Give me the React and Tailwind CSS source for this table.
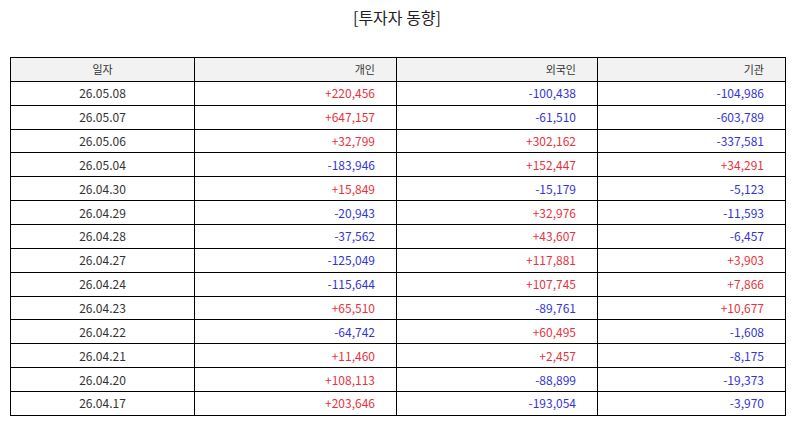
import React from "react";

const rows = [
  ["26.05.08", "+220,456", "-100,438", "-104,986"],
  ["26.05.07", "+647,157", "-61,510", "-603,789"],
  ["26.05.06", "+32,799", "+302,162", "-337,581"],
  ["26.05.04", "-183,946", "+152,447", "+34,291"],
  ["26.04.30", "+15,849", "-15,179", "-5,123"],
  ["26.04.29", "-20,943", "+32,976", "-11,593"],
  ["26.04.28", "-37,562", "+43,607", "-6,457"],
  ["26.04.27", "-125,049", "+117,881", "+3,903"],
  ["26.04.24", "-115,644", "+107,745", "+7,866"],
  ["26.04.23", "+65,510", "-89,761", "+10,677"],
  ["26.04.22", "-64,742", "+60,495", "-1,608"],
  ["26.04.21", "+11,460", "+2,457", "-8,175"],
  ["26.04.20", "+108,113", "-88,899", "-19,373"],
  ["26.04.17", "+203,646", "-193,054", "-3,970"],
];

const Num = ({ v }) => (
  <td
    className={`border border-black text-right pr-[21px] p-0 ${
      v.startsWith("+") ? "text-[#e8323c]" : "text-[#3434d6]"
    }`}
  >
    {v}
  </td>
);

export default function App() {
  return (
    <div
      className="w-[794px] h-[425px] bg-white"
      style={{ fontFamily: '"Noto Sans CJK KR", "Noto Sans", sans-serif' }}
    >
      <div className="pt-[5px] h-[57px] text-center text-[16px] text-[#222] leading-[24px]">
        [투자자 동향]
      </div>
      <div className="px-[10px]">
        <table className="w-[775px] border-collapse table-fixed text-[12px] text-[#333] leading-[16px]">
          <colgroup>
            <col className="w-[184px]" />
            <col className="w-[202px]" />
            <col className="w-[201px]" />
            <col className="w-[188px]" />
          </colgroup>
          <thead>
            <tr className="h-[23.87px] bg-[#f2f2f2]">
              <th className="border border-black font-normal text-center p-0 text-[11px]">일자</th>
              <th className="border border-black font-normal text-right pr-[21px] p-0 text-[11px]">개인</th>
              <th className="border border-black font-normal text-right pr-[21px] p-0 text-[11px]">외국인</th>
              <th className="border border-black font-normal text-right pr-[21px] p-0 text-[11px]">기관</th>
            </tr>
          </thead>
          <tbody>
            {rows.map((r) => (
              <tr key={r[0]} className="h-[23.87px]">
                <td className="border border-black text-center p-0">{r[0]}</td>
                <Num v={r[1]} />
                <Num v={r[2]} />
                <Num v={r[3]} />
              </tr>
            ))}
          </tbody>
        </table>
      </div>
    </div>
  );
}
